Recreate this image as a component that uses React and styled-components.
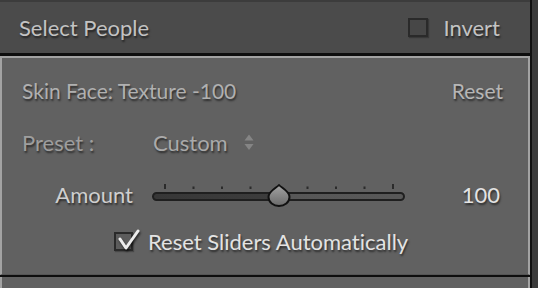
import React from 'react';
import styled, { createGlobalStyle } from 'styled-components';

const GlobalStyle = createGlobalStyle`
  html, body {
    margin: 0;
    padding: 0;
    background: #3b3b3b;
  }
  body {
    font-family: Lato, "Open Sans", sans-serif;
    font-variant-ligatures: none;
  }
`;

const shadow = '1px 2px 2px rgba(0, 0, 0, 0.55)';

const Screen = styled.div`
  display: flex;
  width: 538px;
  height: 288px;
  overflow: hidden;
  background: #3b3b3b;
`;

const Main = styled.div`
  width: 530px;
  display: flex;
  flex-direction: column;
`;

const SideStrip = styled.div`
  flex: 1;
  border-left: 2px solid #111;
  background: #3b3b3b;
`;

const Header = styled.div`
  height: 51px;
  border-top: 2px solid #3c3c3c;
  border-bottom: 3px solid #0e0e0e;
  background: #4b4b4b;
  display: flex;
  align-items: center;
  padding: 0 30px 0 19px;
  font-size: 22px;
  color: #c3c3c3;
  text-shadow: ${shadow};
`;

const HeaderTitle = styled.span`
  flex: 1;
`;

const Toggle = styled.label`
  display: flex;
  align-items: center;
  gap: 15px;
`;

const Box = styled.span`
  display: block;
  position: relative;
  box-sizing: border-box;
  width: ${p => p.$w || 20}px;
  height: 19px;
  border: 2px solid #2a2a2a;
  background: ${p => p.$bg || '#474747'};
  box-shadow: 1px 1px 1px rgba(0, 0, 0, 0.25);
`;

const Tick = styled.svg`
  position: absolute;
  left: 0;
  top: -6px;
  overflow: visible;
  filter: drop-shadow(1px 2px 1px rgba(0, 0, 0, 0.6));
`;

const Panel = styled.div`
  border: 2px solid #a3a3a3;
  border-bottom: 1px solid #555;
  background: #616161;
  padding: 6px 25px 11px 20px;
  font-size: 22px;
  text-shadow: ${shadow};
`;

const Row = styled.div`
  height: ${p => p.$h || 52}px;
  display: ${p => (p.$grid ? 'grid' : 'flex')};
  grid-template-columns: 111px 1fr;
  column-gap: 19px;
  align-items: center;
  justify-content: space-between;
  font-size: ${p => p.$size || 22}px;
`;

const Text = styled.span`
  color: ${p => p.$color || '#b0b0b0'};
  justify-self: ${p => (p.$end ? 'end' : 'start')};
`;

const PresetValue = styled.div`
  display: flex;
  align-items: center;
  gap: 16px;
  margin-left: 1px;
`;

const Stepper = styled.svg`
  display: block;
  margin-top: 1px;
`;

const SliderLine = styled.div`
  display: flex;
  align-items: center;
`;

const SliderArea = styled.div`
  position: relative;
  width: 253px;
  height: 30px;
`;

const Track = styled.div`
  position: absolute;
  left: 0;
  right: 0;
  top: 13px;
  height: 9px;
  box-sizing: border-box;
  border: 2px solid #1f1f1f;
  border-radius: 5px;
  background: linear-gradient(to right, #373737 0, #3d3d3d 50%, #575757 50%, #585858 100%);
`;

const Ticks = styled.svg`
  position: absolute;
  left: 0;
  top: 0;
`;

const Thumb = styled.svg`
  position: absolute;
  left: 115px;
  top: 5px;
  overflow: visible;
`;

const Value = styled.span`
  margin-left: auto;
  margin-right: 3px;
  color: #e3e3e3;
`;

const CheckText = styled.span`
  margin-left: -4px;
  color: #e3e3e3;
`;

const Separator = styled.div`
  height: 2px;
  background: #0e0e0e;
`;

const NextPanel = styled.div`
  flex: 1;
  border-left: 2px solid #a3a3a3;
  border-right: 2px solid #a3a3a3;
  background: #616161;
`;

const tickXs = [13, 41.5, 70, 98.5, 127, 155.5, 184, 212.5, 241];

export default function App() {
  return (
    <>
      <GlobalStyle />
      <Screen>
        <Main>
          <Header>
            <HeaderTitle>Select People</HeaderTitle>
            <Toggle>
              <Box />
              <span>Invert</span>
            </Toggle>
          </Header>
          <Panel>
            <Row $size={21}>
              <Text>Skin Face: Texture -100</Text>
              <Text $color="#b6b6b6">Reset</Text>
            </Row>
            <Row $grid>
              <Text $color="#9e9e9e">Preset :</Text>
              <PresetValue>
                <Text $color="#aaaaaa">Custom</Text>
                <Stepper width="10" height="17" viewBox="0 0 10 17">
                  <path d="M5 0.5 L9.5 6.5 L0.5 6.5 Z" fill="#858585" />
                  <path d="M0.5 10 L9.5 10 L5 16 Z" fill="#858585" />
                </Stepper>
              </PresetValue>
            </Row>
            <Row $grid>
              <Text $color="#cfcfcf" $end>Amount</Text>
              <SliderLine>
                <SliderArea>
                  <Ticks width="253" height="14" viewBox="0 0 253 14">
                    {tickXs.map((x, i) => {
                      const edge = i === 0 || i === tickXs.length - 1;
                      return (
                        <rect
                          key={x}
                          x={x - 1}
                          y={edge ? 5 : 7.5}
                          width="2"
                          height={edge ? 5 : 2.5}
                          fill="#2b2b2b"
                        />
                      );
                    })}
                  </Ticks>
                  <Track />
                  <Thumb width="24" height="23" viewBox="0 0 24 23">
                    <defs>
                      <linearGradient id="thumbFill" x1="0" y1="0" x2="0" y2="1">
                        <stop offset="0" stopColor="#a4a4a4" />
                        <stop offset="1" stopColor="#6a6a6a" />
                      </linearGradient>
                    </defs>
                    <path
                      d="M12 1 C14 3.5 22.5 7 22.5 13 C22.5 18.5 17.5 22 12 22 C6.5 22 1.5 18.5 1.5 13 C1.5 7 10 3.5 12 1 Z"
                      fill="url(#thumbFill)"
                      stroke="#111"
                      strokeWidth="2"
                      strokeLinejoin="round"
                    />
                  </Thumb>
                </SliderArea>
                <Value>100</Value>
              </SliderLine>
            </Row>
            <Row $grid $h={43}>
              <Text $end>
                <Box $w={19} $bg="#5c5c5c">
                  <Tick width="24" height="24" viewBox="0 0 24 24">
                    <path
                      d="M4 11 L10 20 L22 3"
                      fill="none"
                      stroke="#ececec"
                      strokeWidth="3"
                      strokeLinecap="round"
                      strokeLinejoin="round"
                    />
                  </Tick>
                </Box>
              </Text>
              <CheckText>Reset Sliders Automatically</CheckText>
            </Row>
          </Panel>
          <Separator />
          <NextPanel />
        </Main>
        <SideStrip />
      </Screen>
    </>
  );
}
